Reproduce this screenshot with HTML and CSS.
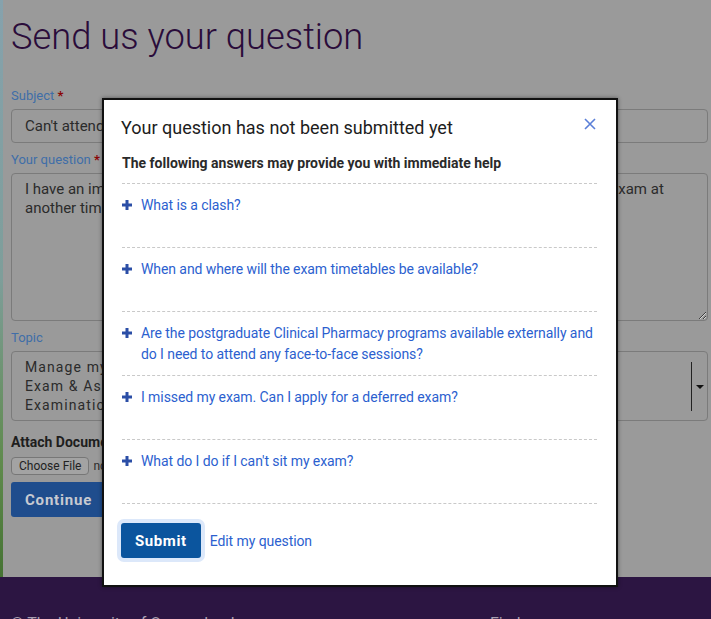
FILE: index.html
```html
<!DOCTYPE html>
<html lang="en">
<head>
  <meta charset="UTF-8" />
  <meta name="viewport" content="width=device-width, initial-scale=1.0"/>
  <title>Send us your question</title>
  <link rel="stylesheet" href="styles.css">
</head>
<body>
  <div class="page">
    <main class="content">
      <h1>Send us your question</h1>

      <div class="form-group">
        <label class="field-label" for="subject">Subject <span class="req">*</span></label>
        <input class="field" type="text" id="subject" value="Can't attend my exam" readonly/>
      </div>

      <div class="form-group">
        <label class="field-label" for="question">Your question <span class="req">*</span></label>
        <textarea class="field field-area" id="question" readonly>I have an important family commitment on the day and I need to know if I could take my exam at
another time.</textarea>
      </div>

      <div class="form-group">
        <label class="field-label">Topic</label>
        <div class="field field-select">
          <div class="select-text">Manage my studies<br>Exam &amp; Assessment<br>Examinations</div>
          <div class="select-arrow"></div>
        </div>
      </div>

      <div class="attach">
        <div class="attach-title">Attach Document</div>
        <div class="file-row">
          <span class="file-btn">Choose File</span>
          <span class="file-none">no file selected</span>
        </div>
      </div>

      <button class="btn-continue">Continue</button>
    </main>

    <footer class="site-footer">
      <div class="footer-col">&copy; The University of Queensland</div>
      <div class="footer-col footer-right">Find us</div>
    </footer>
  </div>

  <div class="modal">
    <div class="modal-head">
      <h2>Your question has not been submitted yet</h2>
      <span class="modal-close">
        <svg width="12" height="12" viewBox="0 0 12 12"><path d="M1 1L11 11M11 1L1 11" stroke="#5a7fd8" stroke-width="1.6" fill="none"/></svg>
      </span>
    </div>
    <p class="modal-sub">The following answers may provide you with immediate help</p>

    <ul class="answers">
      <li><svg class="plus" viewBox="0 0 10 10"><path d="M5 0V10M0 5H10" stroke="#2b4ea6" stroke-width="3"/></svg><a href="#">What is a clash?</a></li>
      <li><svg class="plus" viewBox="0 0 10 10"><path d="M5 0V10M0 5H10" stroke="#2b4ea6" stroke-width="3"/></svg><a href="#">When and where will the exam timetables be available?</a></li>
      <li><svg class="plus" viewBox="0 0 10 10"><path d="M5 0V10M0 5H10" stroke="#2b4ea6" stroke-width="3"/></svg><a href="#">Are the postgraduate Clinical Pharmacy programs available externally and do I need to attend any face-to-face sessions?</a></li>
      <li><svg class="plus" viewBox="0 0 10 10"><path d="M5 0V10M0 5H10" stroke="#2b4ea6" stroke-width="3"/></svg><a href="#">I missed my exam. Can I apply for a deferred exam?</a></li>
      <li><svg class="plus" viewBox="0 0 10 10"><path d="M5 0V10M0 5H10" stroke="#2b4ea6" stroke-width="3"/></svg><a href="#">What do I do if I can't sit my exam?</a></li>
    </ul>

    <div class="modal-actions">
      <button class="btn-submit">Submit</button>
      <a href="#" class="edit-link">Edit my question</a>
    </div>
  </div>
</body>
</html>
```

FILE: styles.css
```css
html, body { margin: 0; padding: 0; }
body {
  font-family: Roboto, "Liberation Sans", Arial, sans-serif;
  background: linear-gradient(#86a2ad, #7e9e9a 45%, #5f8a4c 75%, #3c6a2a);
  height: 619px; overflow: hidden;
}
.page { margin-left: 3px; background: #9a9a9a; min-height: 619px; }
.content { padding: 14px 3px 60px 8px; }

h1 {
  margin: 0 0 27px; font-size: 36.3px; font-weight: 300; line-height: 46px;
  color: #2a0c3a;
}
.form-group { margin-bottom: 8px; }
.field-label {
  display: block; font-size: 13px; line-height: 18px; color: #3f6ea8;
  margin-bottom: 4px;
}
.req { color: #8a0505; font-weight: bold; }
.field {
  display: block; width: 100%; box-sizing: border-box;
  background: #9a9a9a; border: 1px solid #7b7b7b; border-radius: 4px;
  font-family: Roboto, "Liberation Sans", Arial, sans-serif;
  font-size: 15px; color: #2b2b2b; padding: 0 13px; margin: 0;
}
input.field { height: 34px; outline: none; }
.field-area {
  height: 148px; padding-top: 6px; line-height: 19px; resize: vertical;
  outline: none;
}
.field-select {
  height: 70px; display: flex; align-items: center; justify-content: space-between;
  padding-right: 5px;
}
.select-text { font-size: 14px; line-height: 19px; letter-spacing: 1.1px; }
.select-arrow {
  height: 49px; border-left: 1px solid #222; width: 10px; position: relative;
}
.select-arrow::after {
  content: ""; position: absolute; left: 4px; top: 23px;
  border-left: 4px solid transparent; border-right: 4px solid transparent;
  border-top: 4px solid #111;
}
.attach { margin-top: 12px; }
.attach-title { font-weight: bold; font-size: 14px; line-height: 18px; color: #1e1e1e; }
.file-row { display: flex; align-items: center; gap: 4px; margin-top: 6px; }
.file-btn {
  font-size: 12px; line-height: 16px; padding: 0 7px; color: #222;
  border: 1px solid #777; border-radius: 4px; background: #a3a3a3;
}
.file-none { font-size: 12px; color: #2b2b2b; }
.btn-continue {
  margin-top: 7px; height: 35px; padding: 0 14px; border: none; border-radius: 3px;
  background: #1f4d8d; color: #c7cad1; font-family: Roboto, "Liberation Sans", Arial, sans-serif;
  font-size: 15px; font-weight: bold; letter-spacing: 0.8px;
}

.site-footer {
  background: #2c1542; margin-left: -3px; padding: 37px 11px 0;
  height: 60px; display: flex; color: #a79fb0; font-size: 16px;
}
.footer-col { width: 479px; }
.footer-right { width: auto; }

.modal {
  position: absolute; left: 102px; top: 98px; width: 516px; box-sizing: border-box;
  background: #fff; border: 2px solid #111; padding: 16px 19px 27px 18px;
  box-shadow: 0 0 4px rgba(0, 0, 0, 0.45);
}
.modal-head { display: flex; justify-content: space-between; align-items: flex-start; }
.modal-head h2 {
  margin: 0 0 0 -1px; font-size: 18px; font-weight: 400; line-height: 24px; color: #1d1d1d;
}
.modal-close { margin-top: 2px; margin-right: 1px; line-height: 0; }
.modal-sub {
  margin: 13px 0 10px 0; font-size: 14px; font-weight: bold; line-height: 20px; color: #2a2a2a;
}
.answers { list-style: none; margin: 0; padding: 0; border-top: 1px dashed #c9c9c9; }
.answers li {
  display: flex; gap: 9px; align-items: flex-start; min-height: 42px;
  padding: 11px 0 10px 0; border-bottom: 1px dashed #c9c9c9;
  font-size: 14px; line-height: 21px; letter-spacing: -0.08px;
}
.answers a { color: #2c5fcf; text-decoration: none; }
.plus { width: 10px; height: 10px; flex: none; margin-top: 5px; }
.modal-actions { display: flex; align-items: center; gap: 9px; margin-top: 19px; margin-left: -1px; }
.btn-submit {
  height: 35px; padding: 0 14px; border: none; border-radius: 3px;
  background: #0b559e; color: #fff; font-family: Roboto, "Liberation Sans", Arial, sans-serif;
  font-size: 15px; font-weight: bold; letter-spacing: 0.6px;
  box-shadow: 0 0 0 4px #dce8fa;
}
.edit-link { color: #2c5fcf; text-decoration: none; font-size: 14px; letter-spacing: -0.08px; }
```
